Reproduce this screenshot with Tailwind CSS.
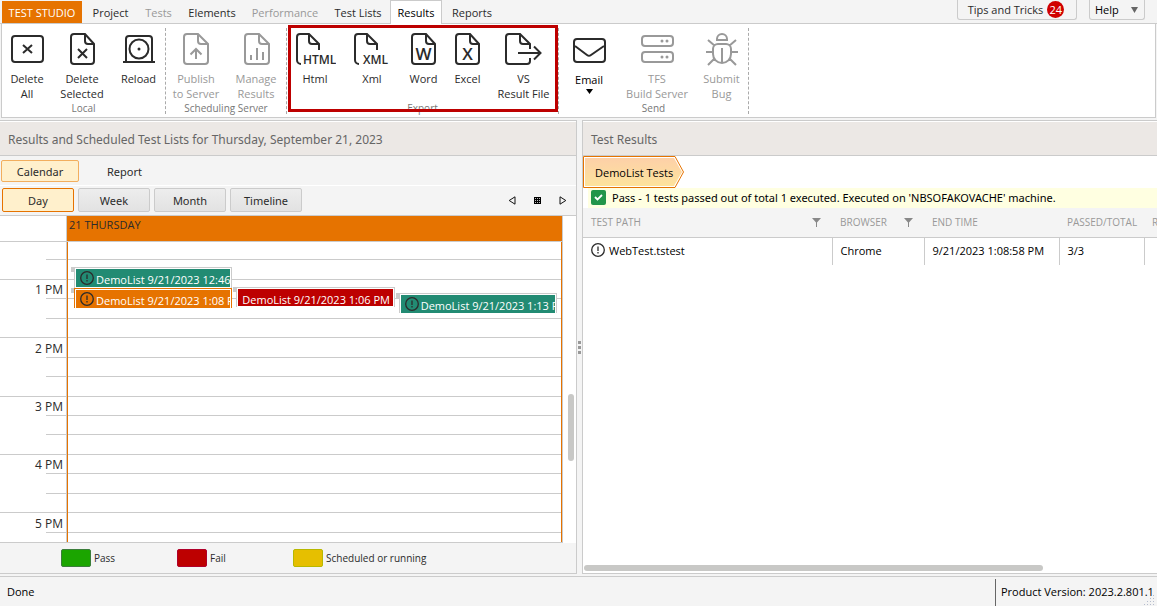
<!DOCTYPE html>
<html lang="en">
<head>
<meta charset="utf-8">
<title>Test Studio</title>
<script src="https://cdn.jsdelivr.net/npm/@tailwindcss/browser@4"></script>
</head>
<body class="flex h-screen flex-col overflow-hidden bg-[#f4f4f4] font-['Open_Sans','Noto_Sans',sans-serif] text-xs leading-[15px] text-[#2b2b2b]">

<!-- Tabs -->
<header class="relative z-10 flex h-6 shrink-0 items-stretch border-b border-[#cbcbcb] pl-[2px]">
  <nav class="flex items-stretch">
    <button class="mr-[2px] mt-px w-20 whitespace-nowrap bg-[#e67300] text-[11px] text-white">TEST STUDIO</button>
    <button class="w-[53px] pt-px text-[11px]">Project</button>
    <button class="w-[43px] pt-px text-[11px] text-[#999]" disabled>Tests</button>
    <button class="w-16 pt-px text-[11px]">Elements</button>
    <button class="w-[82px] pt-px text-[11px] text-[#999]" disabled>Performance</button>
    <button class="w-16 pt-px text-[11px] whitespace-nowrap">Test Lists</button>
    <button class="-mb-px w-[52px] border-x border-t border-[#cbcbcb] bg-white text-[11px] text-black">Results</button>
    <button class="w-[60px] pt-px text-[11px]">Reports</button>
  </nav>
  <div class="ml-auto flex items-start gap-3 pr-3">
    <button class="flex h-5 w-[120px] items-center justify-center gap-1 whitespace-nowrap rounded-b-[3px] border border-t-0 border-[#cbcbcb] pb-px pr-0.5 text-[11px]">Tips and Tricks
      <span class="flex size-[17px] items-center justify-center rounded-full bg-[#d00000] text-[11px] text-white">24</span>
    </button>
    <button class="flex h-5 w-14 items-center justify-between rounded-b-[3px] border border-t-0 border-[#cbcbcb] pl-[5px] pr-1.5 text-[11px] text-black">Help
      <svg class="h-[6px] w-[7px]" viewBox="0 0 7 6"><path d="M0 0h7L3.5 6z" fill="#666"/></svg>
    </button>
  </div>
</header>

<!-- Ribbon -->
<section class="mx-px -mt-px flex h-[95px] shrink-0 border border-[#cbcbcb] bg-white pb-[3px] pt-1 text-[11px]">
  <div class="flex w-[164px] flex-col border-r border-dashed border-[#aaa]">
    <div class="flex flex-1 items-start">
      <button class="w-[50px]"><svg class="mx-auto mb-1 mt-[3px] size-9" viewBox="0 0 36 36" fill="none" stroke="#2b2b2b" stroke-width="2"><rect x="3" y="5" width="31" height="26" rx="3"/><path d="M14 14l9 8M23 14l-9 8"/></svg>Delete<br>All</button>
      <button class="w-[60px]"><svg class="mx-auto mb-1 mt-[3px] size-9" viewBox="0 0 36 36" fill="none" stroke="#2b2b2b" stroke-width="2"><path d="M21 3H10a3 3 0 0 0-3 3v24a3 3 0 0 0 3 3h17a3 3 0 0 0 3-3V13zM21 3v7a3 3 0 0 0 3 3h6M14 18l9 9M23 18l-9 9"/></svg>Delete<br>Selected</button>
      <button class="w-[53px]"><svg class="mx-auto mb-1 mt-[3px] size-9" viewBox="0 0 36 36" fill="none" stroke="#2b2b2b" stroke-width="2"><path d="M5 31V8a3 3 0 0 1 3-3h20a3 3 0 0 1 3 3v23M2 31h32"/><circle cx="18" cy="18" r="9.500"/><circle cx="18" cy="18" r="1.500" fill="#2b2b2b" stroke="none"/></svg>Reload</button>
    </div>
    <div class="h-[13px] text-center text-[10px] leading-[15px] text-[#777]">Local</div>
  </div>
  <div class="flex w-[121px] flex-col border-r border-dashed border-[#aaa] text-[#999]">
    <div class="flex flex-1 items-start whitespace-nowrap">
      <button class="w-[60px]" disabled><svg class="mx-auto mb-1 mt-[3px] size-9" viewBox="0 0 36 36" fill="none" stroke="#999" stroke-width="2"><path d="M20 3H9a3 3 0 0 0-3 3v24a3 3 0 0 0 3 3h18a3 3 0 0 0 3-3V13zM20 3v7a3 3 0 0 0 3 3h7M18 28V18M12.500 23.500L18 18l5.500 5.500"/></svg>Publish<br>to Server</button>
      <button class="w-[60px]" disabled><svg class="mx-auto mb-1 mt-[3px] size-9" viewBox="0 0 36 36" fill="none" stroke="#999" stroke-width="2"><path d="M21 3H10a3 3 0 0 0-3 3v24a3 3 0 0 0 3 3h18a3 3 0 0 0 3-3V13zM21 3v7a3 3 0 0 0 3 3h7"/><path d="M13 29v-5M19 29V17M25 29v-8" stroke-width="2"/></svg>Manage<br>Results</button>
    </div>
    <div class="h-[13px] text-center text-[10px] leading-[15px] text-[#777]">Scheduling Server</div>
  </div>
  <div class="relative flex w-[272px] flex-col border-r border-dashed border-[#aaa]">
    <div class="flex flex-1 items-start whitespace-nowrap">
      <button class="w-14"><svg class="mx-auto mb-1 mt-[3px] h-9 w-[42px]" viewBox="0 0 42 36" fill="none" stroke="#2b2b2b" stroke-width="2"><path d="M7 33a4 4 0 0 1-4-4V6a3 3 0 0 1 3-3h9l10 10v6M15 3v7a3 3 0 0 0 3 3h7"/><text x="9" y="33" fill="#2b2b2b" stroke="none" font-size="12" font-weight="600">HTML</text></svg>Html</button>
      <button class="w-[58px]"><svg class="mx-auto mb-1 mt-[3px] h-9 w-[42px]" viewBox="0 0 42 36" fill="none" stroke="#2b2b2b" stroke-width="2"><path d="M8 33a4 4 0 0 1-4-4V6a3 3 0 0 1 3-3h9l10 10v6M16 3v7a3 3 0 0 0 3 3h7"/><text x="12" y="33" fill="#2b2b2b" stroke="none" font-size="12" font-weight="600">XML</text></svg>Xml</button>
      <button class="w-[45px]"><svg class="mx-auto mb-1 mt-[3px] size-9" viewBox="0 0 36 36" fill="none" stroke="#2b2b2b" stroke-width="2"><path d="M20 3H9a3 3 0 0 0-3 3v24a3 3 0 0 0 3 3h17a3 3 0 0 0 3-3V13zM20 3v7a3 3 0 0 0 3 3h6"/><text x="17.500" y="29" text-anchor="middle" fill="#2b2b2b" stroke="none" font-size="17" font-weight="600">W</text></svg>Word</button>
      <button class="w-[43px]"><svg class="mx-auto mb-1 mt-[3px] size-9" viewBox="0 0 36 36" fill="none" stroke="#2b2b2b" stroke-width="2"><path d="M20 3H9a3 3 0 0 0-3 3v24a3 3 0 0 0 3 3h17a3 3 0 0 0 3-3V13zM20 3v7a3 3 0 0 0 3 3h6"/><text x="17.500" y="29" text-anchor="middle" fill="#2b2b2b" stroke="none" font-size="17" font-weight="600">X</text></svg>Excel</button>
      <button class="w-[69px]"><svg class="mx-auto mb-1 mt-[3px] h-9 w-[42px]" viewBox="0 0 42 36" fill="none" stroke="#2b2b2b" stroke-width="2"><path d="M27 18v-5L17 3H6a3 3 0 0 0-3 3v24a3 3 0 0 0 3 3h18a3 3 0 0 0 3-3v-3M17 3v7a3 3 0 0 0 3 3h7M15 22h22M31 15.500l6.500 6.500-6.500 6.500"/></svg>VS<br>Result File</button>
    </div>
    <div class="h-[13px] text-center text-[10px] leading-[15px] text-[#777]">Export</div>
    <div class="pointer-events-none absolute -top-[3px] bottom-[2px] left-px right-0 border-[3px] border-[#bd0000]"></div>
  </div>
  <div class="flex w-[190px] flex-col border-r border-dashed border-[#aaa] text-[#999]">
    <div class="flex flex-1 items-start whitespace-nowrap">
      <button class="w-[60px] text-black"><svg class="mx-auto mb-[5px] mt-[3px] size-9" viewBox="0 0 36 36" fill="none" stroke="#2b2b2b" stroke-width="2"><rect x="3" y="8" width="31" height="23" rx="3"/><path d="M4 15l12 9q2 1.500 4 0l13-9"/></svg>Email
        <svg class="mx-auto mt-[2px] h-[5px] w-[7px]" viewBox="0 0 7 5"><path d="M0 0h7L3.500 5z"/></svg></button>
      <button class="w-[76px]" disabled><svg class="mx-auto mb-1 mt-[3px] size-9" viewBox="0 0 36 36" fill="none" stroke="#999" stroke-width="2"><rect x="3" y="5" width="31" height="10" rx="3"/><rect x="3" y="21" width="31" height="10" rx="3"/><g fill="#999" stroke="none"><circle cx="23" cy="10" r="1.500"/><circle cx="28" cy="10" r="1.500"/><circle cx="23" cy="26" r="1.500"/><circle cx="28" cy="26" r="1.500"/></g></svg>TFS<br>Build Server</button>
      <button class="w-[53px]" disabled><svg class="mx-auto mb-1 mt-[3px] size-9" viewBox="0 0 36 36" fill="none" stroke="#999" stroke-width="2"><path d="M13 9V8a5 5 0 0 1 10 0v1zM14 13h8a5 5 0 0 1 5 5v5a9 9 0 0 1-18 0v-5a5 5 0 0 1 5-5zM18 17v14M2 21h7M27 21h7M4 9l7 6M32 9l-7 6M4 34l6-6M32 34l-6-6"/></svg>Submit<br>Bug</button>
    </div>
    <div class="h-[13px] text-center text-[10px] leading-[15px] text-[#777]">Send</div>
  </div>
</section>

<!-- Panels -->
<main class="mt-[2px] flex min-h-0 flex-1">
  <section class="flex min-w-0 flex-[577_1_0] flex-col border-y border-r border-[#cbcbcb]">
    <h2 class="flex h-[35px] shrink-0 items-center border-b border-t border-b-[#cbcbcb] border-t-white bg-[#ece8e5] px-2 pt-[2px] font-['Noto_Sans',sans-serif] text-xs text-[#666]">Results and Scheduled Test Lists for Thursday, September 21, 2023</h2>
    <div class="flex h-[30px] shrink-0 items-center border-b border-white pl-px font-['Noto_Sans',sans-serif] text-[11px]">
      <button class="h-[22px] w-[78px] rounded-[2px] border border-[#f2ae5e] bg-[#fff0cc] pt-px">Calendar</button>
      <button class="h-[22px] w-[91px] pt-px">Report</button>
    </div>
    <div class="flex h-[30px] shrink-0 items-center gap-1 border-b border-[#cbcbcb] pb-px pl-[2px] font-['Noto_Sans',sans-serif] text-[11px]">
      <button class="h-6 w-[72px] rounded-[2px] border border-[#e67300] bg-[#fff0cc]">Day</button>
      <button class="h-6 w-[72px] rounded-[2px] border border-[#cbcbcb] bg-linear-to-b from-[#ededed] to-[#e2e2e2]">Week</button>
      <button class="h-6 w-[72px] rounded-[2px] border border-[#cbcbcb] bg-linear-to-b from-[#ededed] to-[#e2e2e2]">Month</button>
      <button class="h-6 w-[72px] rounded-[2px] border border-[#cbcbcb] bg-linear-to-b from-[#ededed] to-[#e2e2e2]">Timeline</button>
      <div class="ml-auto flex items-center gap-[18px] pr-[9px]">
        <button aria-label="Previous"><svg class="h-[9px] w-2" viewBox="0 0 8 9"><path d="M7 .8v7.400L1.200 4.500z" fill="none" stroke="#111"/></svg></button>
        <button aria-label="Today"><svg class="size-[7px]" viewBox="0 0 7 7"><path d="M0 0h7v7H0z"/><path d="M1 1h1v1H1zM3 1h1v1H3zM5 1h1v1H5zM1 3h1v1H1zM3 3h1v1H3zM5 3h1v1H5zM1 5h1v1H1zM3 5h1v1H3zM5 5h1v1H5z" fill="#bbb"/></svg></button>
        <button aria-label="Next"><svg class="h-[9px] w-2" viewBox="0 0 8 9"><path d="M1 .8v7.400l5.800-3.700z" fill="none" stroke="#111"/></svg></button>
      </div>
    </div>

    <div class="flex min-h-0 flex-1 bg-white">
      <div class="flex min-w-0 flex-1 flex-col border-b border-r border-[#cbcbcb]">
        <div class="flex h-[26px] shrink-0 border-b border-[#cbcbcb]">
          <div class="w-[67px] border-r border-[#cbcbcb]"></div>
          <div class="flex-1 bg-[#e67300] pl-[2px] pt-px text-[11px]">21 THURSDAY</div>
        </div>
        <div class="flex min-h-0 flex-1 overflow-hidden">
          <div class="w-[67px] border-r border-[#cbcbcb] text-right">
            <div class="ml-[46px] h-[18px] border-b border-[#cbcbcb]"></div>
            <div class="h-5 border-b border-[#cbcbcb]"></div>
            <div class="ml-[46px] flex h-[19px] items-center justify-end whitespace-nowrap border-b border-[#cbcbcb] pr-[3px] pt-px">1 PM</div>
            <div class="ml-[46px] h-5 border-b border-[#cbcbcb]"></div>
            <div class="h-[19px] border-b border-[#cbcbcb]"></div>
            <div class="ml-[46px] flex h-5 items-center justify-end whitespace-nowrap border-b border-[#cbcbcb] pr-[3px] pt-px">2 PM</div>
            <div class="ml-[46px] h-[19px] border-b border-[#cbcbcb]"></div>
            <div class="h-5 border-b border-[#cbcbcb]"></div>
            <div class="ml-[46px] flex h-[19px] items-center justify-end whitespace-nowrap border-b border-[#cbcbcb] pr-[3px] pt-px">3 PM</div>
            <div class="ml-[46px] h-[19px] border-b border-[#cbcbcb]"></div>
            <div class="h-5 border-b border-[#cbcbcb]"></div>
            <div class="ml-[46px] flex h-[19px] items-center justify-end whitespace-nowrap border-b border-[#cbcbcb] pr-[3px] pt-px">4 PM</div>
            <div class="ml-[46px] h-5 border-b border-[#cbcbcb]"></div>
            <div class="h-[19px] border-b border-[#cbcbcb]"></div>
            <div class="ml-[46px] flex h-5 items-center justify-end whitespace-nowrap border-b border-[#cbcbcb] pr-[3px] pt-px">5 PM</div>
          </div>
          <div class="relative flex-1 border-x border-[#e67300]">
            <div class="h-[18px] border-b border-[#cbcbcb]"></div>
            <div class="h-5 border-b border-[#cbcbcb]"></div>
            <div class="h-[19px] border-b border-[#cbcbcb]"></div>
            <div class="h-5 border-b border-[#cbcbcb]"></div>
            <div class="h-[19px] border-b border-[#cbcbcb]"></div>
            <div class="h-5 border-b border-[#cbcbcb]"></div>
            <div class="h-[19px] border-b border-[#cbcbcb]"></div>
            <div class="h-5 border-b border-[#cbcbcb]"></div>
            <div class="h-[19px] border-b border-[#cbcbcb]"></div>
            <div class="h-[19px] border-b border-[#cbcbcb]"></div>
            <div class="h-5 border-b border-[#cbcbcb]"></div>
            <div class="h-[19px] border-b border-[#cbcbcb]"></div>
            <div class="h-5 border-b border-[#cbcbcb]"></div>
            <div class="h-[19px] border-b border-[#cbcbcb]"></div>
            <div class="h-5 border-b border-[#cbcbcb]"></div>

            <!-- Appointments, laid over the time slots -->
            <div class="absolute left-[3px] right-[3px] top-0 grid grid-cols-3 items-start text-[11px] text-white">
              <div class="pt-[25px]">
                <div class="flex">
                  <span class="h-[5px] w-[3px] bg-[#cbcbcb]"></span>
                  <div class="mr-px h-[21px] min-w-0 flex-1 border border-b-0 border-[#cbcbcb] bg-white p-px pb-0">
                    <div class="flex h-[18px] items-center overflow-hidden whitespace-nowrap bg-[#228b73] pl-1"><svg class="mr-[2px] size-[14px] shrink-0" viewBox="0 0 14 14" fill="none" stroke="#2b2b2b"><circle cx="7" cy="7" r="6.300" stroke-width="1.300"/><path d="M7 3.500v4.500M7 9v1.500" stroke-width="1.300"/></svg><span class="pt-[3px]">DemoList 9/21/2023 12:46 PM</span></div>
                  </div>
                </div>
                <div class="flex">
                  <span class="h-[5px] w-[3px] bg-[#cbcbcb]"></span>
                  <div class="mr-px h-5 min-w-0 flex-1 border border-b-0 border-[#e67300] bg-white p-px pb-0">
                    <div class="flex h-[18px] items-center overflow-hidden whitespace-nowrap bg-[#e67300] pl-1"><svg class="mr-[2px] size-[14px] shrink-0" viewBox="0 0 14 14" fill="none" stroke="#2b2b2b"><circle cx="7" cy="7" r="6.300" stroke-width="1.300"/><path d="M7 3.500v4.500M7 9v1.500" stroke-width="1.300"/></svg><span class="pt-[3px]">DemoList 9/21/2023 1:08 PM</span></div>
                  </div>
                </div>
              </div>
              <div class="flex pt-[45px]">
                <span class="h-[5px] w-[3px] bg-[#cbcbcb]"></span>
                <div class="mr-px h-5 min-w-0 flex-1 border border-b-0 border-[#cbcbcb] bg-white p-px">
                  <div class="flex h-[17px] items-center overflow-hidden whitespace-nowrap bg-[#bd0000] pl-1"><span class="pt-[3px]">DemoList 9/21/2023 1:06 PM</span></div>
                </div>
              </div>
              <div class="flex pt-[51px]">
                <span class="h-[5px] w-[3px] bg-[#cbcbcb]"></span>
                <div class="mr-px h-5 min-w-0 flex-1 border border-b-0 border-[#cbcbcb] bg-white p-px pb-0">
                  <div class="flex h-[18px] items-center overflow-hidden whitespace-nowrap bg-[#228b73] pl-1"><svg class="mr-[2px] size-[14px] shrink-0" viewBox="0 0 14 14" fill="none" stroke="#2b2b2b"><circle cx="7" cy="7" r="6.300" stroke-width="1.300"/><path d="M7 3.500v4.500M7 9v1.500" stroke-width="1.300"/></svg><span class="pt-[3px]">DemoList 9/21/2023 1:13 PM</span></div>
                </div>
              </div>
            </div>
          </div>
        </div>
      </div>
      <div class="w-[13px] pl-[5px] pt-[178px]"><div class="h-[67px] w-[6px] rounded-full bg-[#c8c8c6]"></div></div>
    </div>

    <div class="flex h-[30px] shrink-0 items-center pl-[61px] text-[10px]">
      <div class="flex w-[116px] items-center gap-[3px]"><span class="h-[18px] w-[30px] rounded-[2px] border border-[#3b7d3b] bg-[#1ba500]"></span>Pass</div>
      <div class="flex w-[116px] items-center gap-[3px]"><span class="h-[18px] w-[30px] rounded-[2px] border border-[#b0002a] bg-[#bd0000]"></span>Fail</div>
      <div class="flex items-center gap-[3px]"><span class="h-[18px] w-[30px] rounded-[2px] border border-[#b8b800] bg-[#e6bf00]"></span>Scheduled or running</div>
    </div>
  </section>

  <div class="flex w-[5px] flex-col items-center justify-center gap-[2px]">
    <span class="size-[3px] bg-[#999]"></span><span class="size-[3px] bg-[#999]"></span><span class="size-[3px] bg-[#999]"></span>
  </div>

  <section class="flex min-w-0 flex-[575_1_0] flex-col overflow-hidden border-y border-l border-[#cbcbcb] bg-white">
    <h2 class="flex h-[35px] shrink-0 items-center border-b border-t border-b-[#cbcbcb] border-t-white bg-[#ece8e5] px-2 pt-[2px] font-['Noto_Sans',sans-serif] text-xs text-[#666]">Test Results</h2>
    <a href="#" class="relative flex h-8 w-[102px] shrink-0 items-center whitespace-nowrap pl-3 pt-[2px] text-xs text-black">
      <svg class="absolute left-0 top-0 h-8 w-[102px]" viewBox="0 0 102 32"><defs><linearGradient id="crumb" x1="0" y1="0" x2="0" y2="1"><stop offset="0" stop-color="#fdd0a8"/><stop offset="1" stop-color="#fde39c"/></linearGradient></defs><path d="M.5.5h91.500l8.500 15.500-8.500 15.500H.5z" fill="#fff" stroke="#e67300"/><path d="M2 2h89l8 14-8 14H2z" fill="url(#crumb)"/></svg>
      <span class="relative text-[11px]">DemoList Tests</span>
    </a>
    <p class="ml-[5px] flex h-5 shrink-0 items-center gap-1.5 whitespace-nowrap bg-[#ffffe1] pb-px pl-[3px] font-['Noto_Sans',sans-serif] text-[11px] text-black">
      <svg class="size-[15px]" viewBox="0 0 15 15"><rect width="15" height="15" rx="2" fill="#229549"/><path d="M4 7l2.500 2.500L11 5" fill="none" stroke="#fff" stroke-width="1.800"/></svg>
      Pass - 1 tests passed out of total 1 executed. Executed on 'NBSOFAKOVACHE' machine.</p>
    <table class="w-[661px] shrink-0 table-fixed border-collapse text-left">
      <colgroup><col class="w-[249px]"><col class="w-[92px]"><col class="w-[135px]"><col class="w-[85px]"><col class="w-[100px]"></colgroup>
      <thead class="bg-[#f4f4f4] text-[10px] text-[#999]">
        <tr class="h-[29px] border-b border-[#cbcbcb]">
          <th class="px-2 font-normal"><span class="flex items-center justify-between pr-[3px]">TEST PATH<svg class="size-[9px]" viewBox="0 0 9 9"><path d="M0 0h9L5 4.500V9H4V4.500z" fill="#888"/></svg></span></th>
          <th class="px-2 font-normal"><span class="flex items-center justify-between pr-[3px]">BROWSER<svg class="size-[9px]" viewBox="0 0 9 9"><path d="M0 0h9L5 4.500V9H4V4.500z" fill="#888"/></svg></span></th>
          <th class="px-2 font-normal">END TIME</th>
          <th class="whitespace-nowrap pl-2 font-normal">PASSED/TOTAL</th>
          <th class="px-2 font-normal">RESULT</th>
        </tr>
      </thead>
      <tbody class="text-[11px] text-black">
        <tr class="h-7">
          <td class="border-r border-[#cbcbcb] px-2 pb-[2px]"><span class="flex items-center gap-1"><svg class="size-[14px]" viewBox="0 0 14 14" fill="none" stroke="#2b2b2b"><circle cx="7" cy="7" r="6.300" stroke-width="1.300"/><path d="M7 3.500v4.500M7 9v1.500" stroke-width="1.300"/></svg>WebTest.tstest</span></td>
          <td class="border-r border-[#cbcbcb] px-2 pb-[2px]">Chrome</td>
          <td class="whitespace-nowrap border-r border-[#cbcbcb] px-2 pb-[2px]">9/21/2023 1:08:58 PM</td>
          <td class="border-r border-[#cbcbcb] px-2 pb-[2px]">3/3</td>
          <td></td>
        </tr>
      </tbody>
    </table>
    <div class="mb-[2px] ml-px mt-auto h-[6px] w-4/5 rounded-full bg-[#c8c8c6]"></div>
  </section>
</main>

<!-- Status bar -->
<footer class="relative mt-[2px] flex h-[30px] shrink-0 items-stretch border-t border-[#cbcbcb] text-[11px] text-black">
  <span class="flex flex-1 items-center pl-[7px]">Done</span>
  <span class="mt-[2px] flex w-[162px] items-center whitespace-nowrap border-l border-[#666] pb-[2px] pl-[5px]">Product Version: 2023.2.801.1</span>
  <svg class="absolute bottom-0 right-[2px] size-[11px]" viewBox="0 0 11 11" fill="#b5bccd"><path d="M9 0h1v1H9zM6 3h1v1H6zM9 3h1v1H9zM3 6h1v1H3zM6 6h1v1H6zM9 6h1v1H9zM0 9h1v1H0zM3 9h1v1H3zM6 9h1v1H6zM9 9h1v1H9z"/></svg>
</footer>
</body>
</html>
